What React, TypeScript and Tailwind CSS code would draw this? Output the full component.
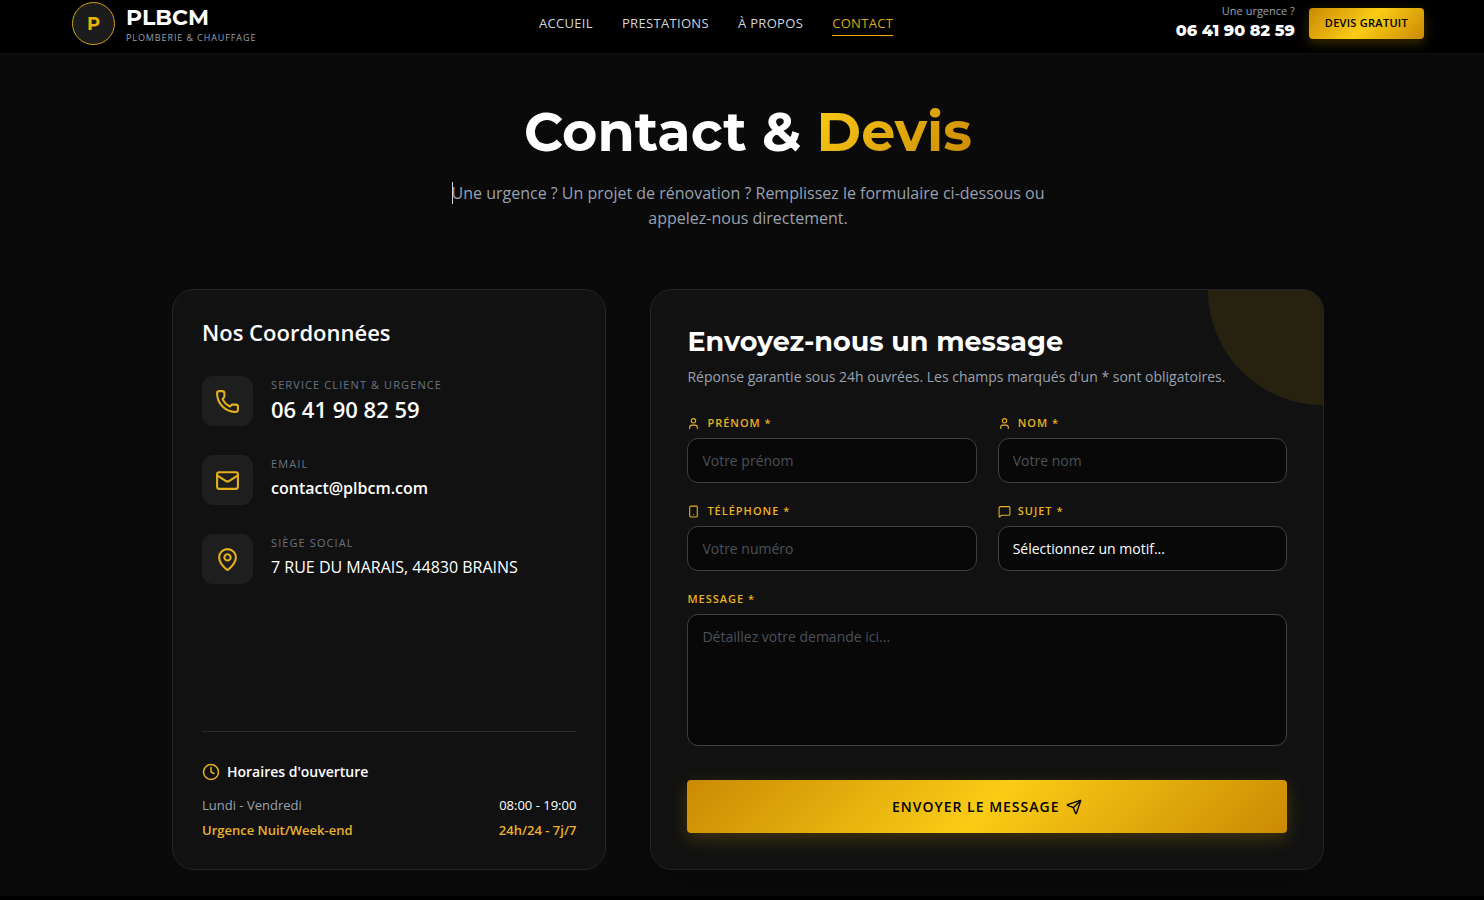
import React from 'react';
import { Clock, Mail, MapPin, MessageSquare, Phone, Send, Smartphone, User } from 'lucide-react';

interface FieldProps {
  id: string;
  label: string;
  icon?: React.ReactNode;
  children: React.ReactNode;
}

interface ContactItemProps {
  icon: React.ReactNode;
  label: string;
  children: React.ReactNode;
}

const links = [
  { label: 'ACCUEIL', active: false },
  { label: 'PRESTATIONS', active: false },
  { label: 'À PROPOS', active: false },
  { label: 'CONTACT', active: true },
];

const inputClass =
  "w-full rounded-[11px] border border-[#3c4044] bg-[#080808] px-3.5 text-sm text-white placeholder:text-[#4b5058] outline-none focus:border-yellow-500";

const Field: React.FC<FieldProps> = ({ id, label, icon, children }) => (
  <div>
    <label htmlFor={id} className="mb-[7px] flex h-4 items-center gap-[7px] text-[11px] font-semibold tracking-[1px] text-[#eab020] uppercase">
      {icon}
      {label}
    </label>
    {children}
  </div>
);

const ContactItem: React.FC<ContactItemProps> = ({ icon, label, children }) => (
  <div className="flex items-start gap-[18px]">
    <div className="flex h-[50px] w-[51px] shrink-0 items-center justify-center rounded-[11px] bg-[#1e1e1e] text-[#e3b11c]">{icon}</div>
    <div>
      <p className="mt-px mb-1 text-[11px] leading-4 font-medium tracking-widest text-gray-500 uppercase">{label}</p>
      {children}
    </div>
  </div>
);

const Header: React.FC = () => (
  <header className="border-b border-white/5 bg-black pl-3">
    <div className="flex h-[53px] items-center justify-between px-[60px] pb-1.5">
      <a href="#" className="flex items-center gap-[11px]">
        <span className="flex size-[43px] items-center justify-center rounded-full border border-[#d4a017] bg-[#1c1c1c] font-['Montserrat','Inter',sans-serif] text-lg font-bold text-[#eab308]">
          P
        </span>
        <span className="flex flex-col pt-1">
          <span className="font-['Montserrat','Inter',sans-serif] text-[22px] leading-6 font-bold text-white">PLBCM</span>
          <span className="text-[9px] leading-4 tracking-widest text-gray-400">PLOMBERIE &amp; CHAUFFAGE</span>
        </span>
      </a>
      <nav className="flex gap-[29px]">
        {links.map((link) => (
          <a
            key={link.label}
            href="#"
            className={`border-b py-px text-[13px] leading-[22px] font-medium tracking-wide ${
              link.active ? 'border-[#eab308] text-[#d9a81c]' : 'border-transparent text-gray-300'
            }`}
          >
            {link.label}
          </a>
        ))}
      </nav>
      <div className="flex items-center gap-3.5">
        <div className="pb-0.5 text-right">
          <p className="text-[11px] leading-4 text-gray-400">Une urgence ?</p>
          <a href="tel:0641908259" className="block font-['Montserrat','Inter',sans-serif] text-base leading-6 font-extrabold text-white">
            06 41 90 82 59
          </a>
        </div>
        <button
          type="button"
          className="h-[31px] rounded bg-linear-135 from-[#ca8a04] via-[#facc15] to-[#ca8a04] px-4 text-[11px] font-semibold tracking-wide text-black shadow-[0_4px_12px_rgba(234,179,8,0.25)]"
        >
          DEVIS GRATUIT
        </button>
      </div>
    </div>
  </header>
);

const Coordinates: React.FC = () => (
  <section className="flex flex-col rounded-[22px] border border-[#222426] bg-[#111111] p-[29px] lg:col-span-2">
    <h2 className="mb-[30px] text-[22px] leading-[27px] font-semibold text-white">Nos Coordonnées</h2>
    <div className="flex flex-col gap-[29px]">
      <ContactItem icon={<Phone size={25} />} label="Service client & urgence">
        <a href="tel:0641908259" className="block text-[22px] leading-6 font-semibold text-white">
          06 41 90 82 59
        </a>
      </ContactItem>
      <ContactItem icon={<Mail size={25} />} label="Email">
        <a href="mailto:contact@plbcm.com" className="block text-base font-semibold text-white">
          contact@plbcm.com
        </a>
      </ContactItem>
      <ContactItem icon={<MapPin size={25} />} label="Siège social">
        <p className="text-base text-white">7 RUE DU MARAIS, 44830 BRAINS</p>
      </ContactItem>
    </div>
    <div className="mt-auto border-t border-[#2a2c30] pt-[29px]">
      <h3 className="mb-3 flex items-center gap-[7px] text-sm leading-[22px] font-semibold text-white">
        <Clock size={18} className="text-[#e3b11c]" />
        Horaires d'ouverture
      </h3>
      <dl className="flex flex-col gap-[5px] text-[13px] leading-5">
        <div className="flex justify-between">
          <dt className="text-gray-400">Lundi - Vendredi</dt>
          <dd className="font-medium text-white">08:00 - 19:00</dd>
        </div>
        <div className="flex justify-between font-semibold text-[#eab030]">
          <dt>Urgence Nuit/Week-end</dt>
          <dd>24h/24 - 7j/7</dd>
        </div>
      </dl>
    </div>
  </section>
);

const ContactForm: React.FC = () => (
  <section className="relative overflow-hidden rounded-[22px] border border-[#222426] bg-[#111111] p-9 shadow-2xl lg:col-span-3">
    <div className="absolute top-0 right-0 size-[115px] rounded-bl-full bg-yellow-500/10" />
    <h2 className="font-['Montserrat','Inter',sans-serif] text-[27px] leading-8 font-bold text-white">Envoyez-nous un message</h2>
    <p className="mt-2 mb-[27px] text-sm leading-[22px] text-gray-400">
      Réponse garantie sous 24h ouvrées. Les champs marqués d'un * sont obligatoires.
    </p>
    <form className="flex flex-col" onSubmit={(e) => e.preventDefault()}>
      <div className="grid gap-x-[21px] gap-y-5 sm:grid-cols-2">
        <Field id="firstname" label="Prénom *" icon={<User size={13} />}>
          <input id="firstname" type="text" placeholder="Votre prénom" className={`${inputClass} h-[45px]`} />
        </Field>
        <Field id="lastname" label="Nom *" icon={<User size={13} />}>
          <input id="lastname" type="text" placeholder="Votre nom" className={`${inputClass} h-[45px]`} />
        </Field>
        <Field id="phone" label="Téléphone *" icon={<Smartphone size={13} />}>
          <input id="phone" type="tel" placeholder="Votre numéro" className={`${inputClass} h-[45px]`} />
        </Field>
        <Field id="subject" label="Sujet *" icon={<MessageSquare size={13} />}>
          <select id="subject" className={`${inputClass} h-[45px] appearance-none`}>
            <option>Sélectionnez un motif...</option>
          </select>
        </Field>
        <div className="sm:col-span-2">
          <Field id="message" label="Message *">
            <textarea
              id="message"
              placeholder="Détaillez votre demande ici..."
              className={`${inputClass} block h-[132px] resize-none py-3`}
            />
          </Field>
        </div>
      </div>
      <button
        type="submit"
        className="mt-[34px] flex h-[53px] items-center justify-center gap-[7px] rounded bg-linear-135 from-[#ca8a04] via-[#facc15] to-[#ca8a04] text-sm font-semibold tracking-[1px] text-black shadow-[0_6px_18px_rgba(234,179,8,0.22)]"
      >
        ENVOYER LE MESSAGE
        <Send size={16} />
      </button>
    </form>
  </section>
);

const App: React.FC = () => {
  return (
    <div className="min-h-screen bg-black font-['Open_Sans',sans-serif]">
      <Header />
      <main className="bg-[#0a0a0a] pt-[46px] pr-4 pb-[26px] pl-7">
        <div className="mx-auto mb-[58px] max-w-[605px] text-center">
          <h1 className="mb-[17px] font-['Montserrat','Inter',sans-serif] text-[54px] leading-[64px] font-bold text-white">
            Contact &amp;{' '}
            <span className="bg-linear-135 from-[#facc15] to-[#ca8a04] bg-clip-text text-transparent">Devis</span>
          </h1>
          <p className="leading-[25px] text-gray-400">
            <span className="relative">
              <span className="absolute top-0 left-0 h-full w-px bg-gray-300" />
              Une
            </span>{' '}
            urgence ? Un projet de rénovation ? Remplissez le formulaire ci-dessous ou appelez-nous directement.
          </p>
        </div>
        <div className="mx-auto grid max-w-[1152px] gap-11 lg:grid-cols-5">
          <Coordinates />
          <ContactForm />
        </div>
      </main>
    </div>
  );
};

export default App;
